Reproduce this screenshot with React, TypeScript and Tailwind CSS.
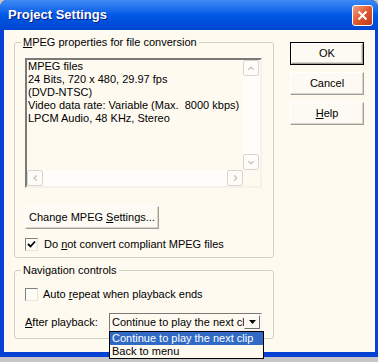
import React from 'react';

const font = { fontFamily: '"Liberation Sans", Arial, sans-serif' };

function ScrollBtn({ dir }: { dir: 'up' | 'down' | 'left' | 'right' }) {
  const paths: Record<string, string> = {
    up: 'M5 10 L8 7 L11 10',
    down: 'M5 7 L8 10 L11 7',
    left: 'M10 5 L7 8 L10 11',
    right: 'M7 5 L10 8 L7 11',
  };
  return (
    <div className="w-[16px] h-[16px] border border-[#d8d6cc] rounded-[2px] bg-[#fdfcf8] flex items-center justify-center shrink-0">
      <svg width="16" height="16" viewBox="0 0 16 16">
        <path d={paths[dir]} fill="none" stroke="#c4c2b8" strokeWidth="1.6" />
      </svg>
    </div>
  );
}

function Checkbox({ checked }: { checked?: boolean }) {
  return (
    <div className="w-[13px] h-[13px] border border-t-[#808080] border-l-[#808080] border-b-[#e8e6dc] border-r-[#e8e6dc] bg-[#fefcf6] flex items-center justify-center shrink-0">
      {checked && (
        <svg width="9" height="9" viewBox="0 0 9 9">
          <path d="M1 4 L3.5 6.5 L8 1.5" fill="none" stroke="#000" strokeWidth="1.8" />
        </svg>
      )}
    </div>
  );
}

function Button({ children, w, isDefault }: { children: React.ReactNode; w: string; isDefault?: boolean }) {
  return (
    <div
      className={`${w} h-[23px] flex items-center justify-center bg-[#fcfaf2] text-[11px] text-black ${
        isDefault ? 'border border-black' : ''
      }`}
    >
      <div className="w-full h-full flex items-center justify-center border border-t-white border-l-white border-b-[#a09e94] border-r-[#a09e94] shadow-[inset_-1px_-1px_0_#d8d6cc]">
        {children}
      </div>
    </div>
  );
}

export default function App() {
  return (
    <div className="relative w-[378px] h-[362px] bg-[#c6c6c6] overflow-hidden" style={font}>
      {/* Window */}
      <div className="w-[378px] h-[357px] bg-[#0842d4] rounded-t-[7px] flex flex-col">
        {/* Title bar */}
        <div className="h-[30px] rounded-t-[7px] bg-gradient-to-b from-[#3d8af5] via-[#0058e6] to-[#0046d0] flex items-center justify-between pl-[8px] pr-[5px]">
          <span className="text-white font-bold text-[13px] [text-shadow:1px_1px_0_#0a1a80]">Project Settings</span>
          <div className="w-[21px] h-[21px] rounded-[3px] border border-white bg-gradient-to-br from-[#f0a080] via-[#e0582e] to-[#c2381a] flex items-center justify-center">
            <svg width="11" height="11" viewBox="0 0 11 11">
              <path d="M1.5 1.5 L9.5 9.5 M9.5 1.5 L1.5 9.5" stroke="#fff" strokeWidth="2" />
            </svg>
          </div>
        </div>

        {/* Body */}
        <div className="flex-1 ml-[4px] mr-[3px] mb-[5px] bg-[#fefaf0] flex text-[11px] leading-[13px] text-black">
          {/* Left column */}
          <div className="ml-[10px] w-[260px] flex flex-col">
            <fieldset className="mt-[6px] h-[222px] border border-[#d0d0bf] rounded-[3px]">
              <legend className="ml-[6px] px-[2px]">
                <span className="underline">M</span>PEG properties for file conversion
              </legend>
              <div className="ml-[10px] mt-[9px] w-[237px] h-[130px] border-2 border-t-[#7a7a78] border-l-[#7a7a78] border-b-[#f4f2ea] border-r-[#f4f2ea] flex flex-col">
                <div className="flex flex-1 min-h-0">
                  <div className="flex-1 pl-[1px] whitespace-pre overflow-hidden">
                    <div>MPEG files</div>
                    <div>24 Bits, 720 x 480, 29.97 fps</div>
                    <div>(DVD-NTSC)</div>
                    <div>Video data rate: Variable (Max.  8000 kbps)</div>
                    <div>LPCM Audio, 48 KHz, Stereo</div>
                  </div>
                  <div className="w-[17px] flex flex-col justify-between bg-[#fefdf9]">
                    <ScrollBtn dir="up" />
                    <ScrollBtn dir="down" />
                  </div>
                </div>
                <div className="h-[16px] flex bg-[#fefdf9]">
                  <div className="flex-1 flex justify-between">
                    <ScrollBtn dir="left" />
                    <ScrollBtn dir="right" />
                  </div>
                  <div className="w-[17px] bg-[#fefaf0]" />
                </div>
              </div>
              <div className="ml-[10px] mt-[18px]">
                <Button w="w-[134px]">
                  Change MPEG <span className="underline ml-[3px]">S</span>ettings...
                </Button>
              </div>
              <div className="ml-[10px] mt-[9px] flex items-center">
                <Checkbox checked />
                <span className="ml-[6px]">
                  Do <span className="underline">n</span>ot convert compliant MPEG files
                </span>
              </div>
            </fieldset>

            <fieldset className="mt-[6px] h-[75px] border border-[#d0d0bf] rounded-[3px]">
              <legend className="ml-[6px] px-[2px]">Navigation controls</legend>
              <div className="ml-[10px] mt-[11px] flex items-center">
                <Checkbox />
                <span className="ml-[5px]">
                  Auto <span className="underline">r</span>epeat when playback ends
                </span>
              </div>
              <div className="ml-[10px] mt-[12px] flex items-center">
                <span className="w-[84px]">
                  <span className="underline">A</span>fter playback:
                </span>
                <div className="w-[153px] h-[18px] border border-t-[#7a7a78] border-l-[#7a7a78] border-b-[#f4f2ea] border-r-[#f4f2ea] bg-[#fefaf0] flex items-center">
                  <span className="flex-1 pl-[2px] whitespace-nowrap overflow-hidden">Continue to play the next cli</span>
                  <div className="w-[16px] h-[14px] mr-[1px] bg-[#fcfaf2] border border-t-white border-l-white border-b-[#707070] border-r-[#707070] flex items-center justify-center">
                    <svg width="7" height="4" viewBox="0 0 7 4">
                      <path d="M0 0 L7 0 L3.5 4 Z" fill="#000" />
                    </svg>
                  </div>
                </div>
              </div>
            </fieldset>
          </div>

          {/* Right column */}
          <div className="ml-[16px] mt-[12px] flex flex-col gap-[7px]">
            <Button w="w-[74px]" isDefault>
              OK
            </Button>
            <Button w="w-[74px]">Cancel</Button>
            <Button w="w-[74px]">
              <span>
                <span className="underline">H</span>elp
              </span>
            </Button>
          </div>
        </div>
      </div>

      {/* Open dropdown list */}
      <div className="absolute left-[109px] top-[331px] w-[155px] border border-black bg-[#fefaf0] text-[11px] leading-[13px]">
        <div className="bg-[#316ac5] text-white pl-[2px]">Continue to play the next clip</div>
        <div className="text-black pl-[2px]">Back to menu</div>
      </div>
    </div>
  );
}
